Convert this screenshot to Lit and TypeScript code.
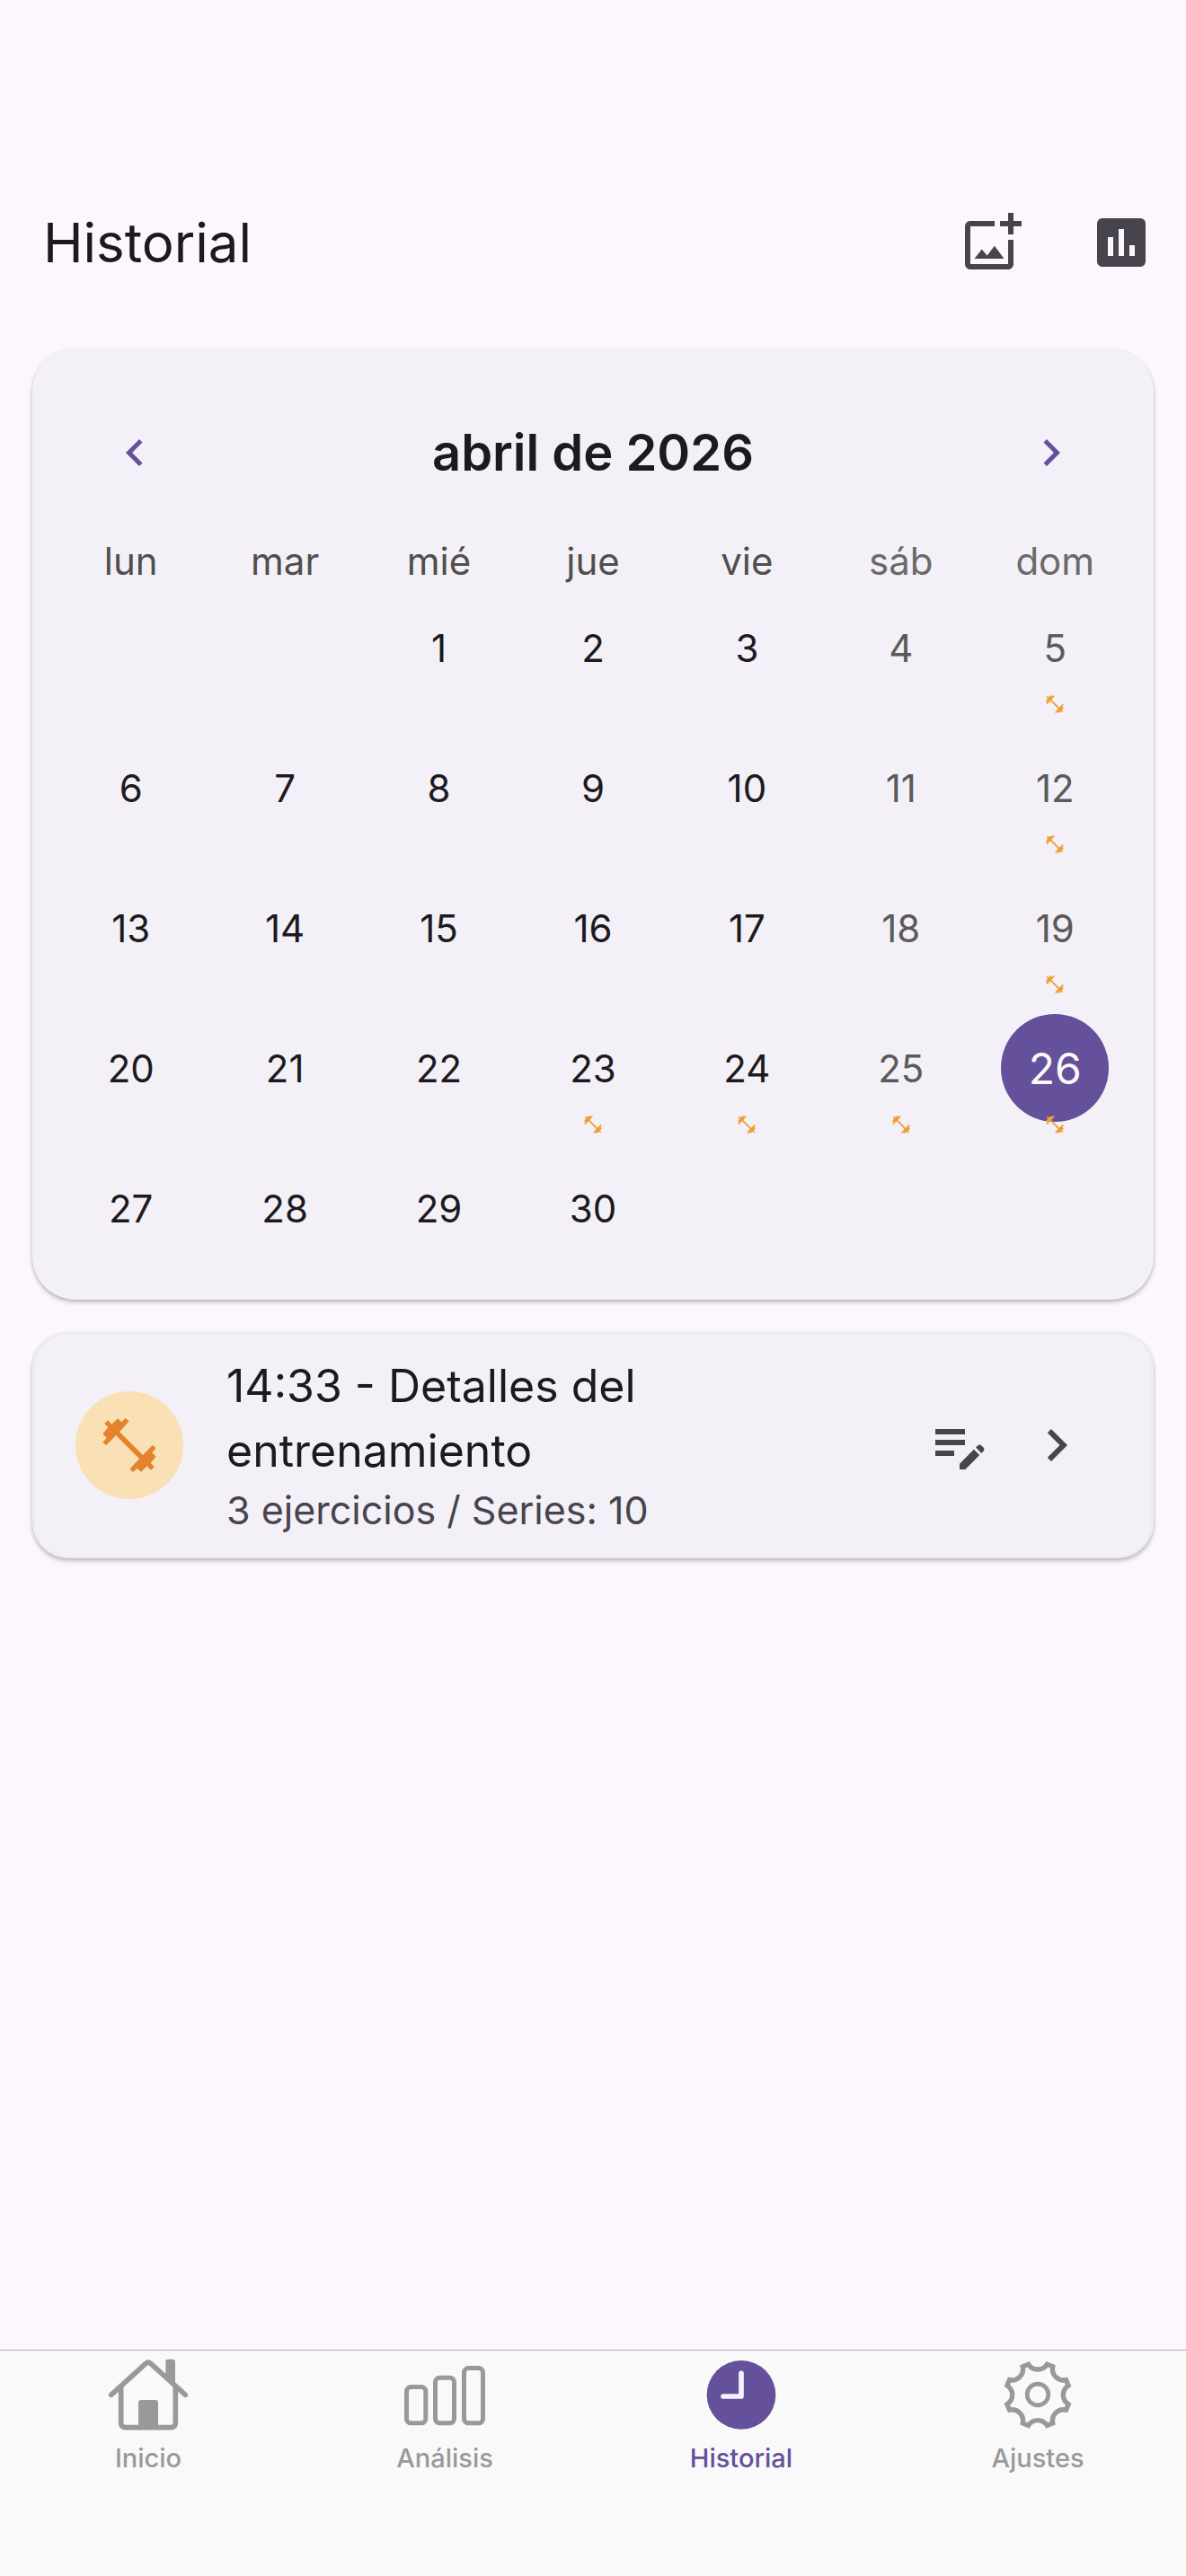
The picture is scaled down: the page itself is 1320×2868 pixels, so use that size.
import { LitElement, html, css, svg, nothing } from "lit";
import { customElement, state } from "lit/decorators.js";
import { classMap } from "lit/directives/class-map.js";

const WEEKDAYS = ["lun", "mar", "mié", "jue", "vie", "sáb", "dom"];
const FIRST_COLUMN = 2;
const DAYS_IN_MONTH = 30;
const TRAINING_DAYS = new Set([5, 12, 19, 23, 24, 25, 26]);

/** Outline of a cog: eight short teeth joined by concave arcs. */
function cogPath(cx: number, cy: number, radius: number, notch: number): string {
  const at = (deg: number) => {
    const a = (deg * Math.PI) / 180;
    return `${(cx + radius * Math.sin(a)).toFixed(1)} ${(cy - radius * Math.cos(a)).toFixed(1)}`;
  };
  let d = `M${at(-17)}`;
  for (let k = 0; k < 8; k++) {
    d += `A${notch} ${notch} 0 0 0 ${at(k * 45 + 17)}L${at(k * 45 + 28)}`;
  }
  return d + "Z";
}

const dumbbell = html`<svg class="dumbbell" viewBox="144 159 216 216" aria-hidden="true">
  <path fill="currentColor" d="M180 184L193 197L213 178L226 190L239 177L251 187L219 222L297 300L329 267L341 276L328 292L341 305L323 326L335 339L324 350L311 337L291 356L278 344L265 357L253 347L285 312L207 234L175 267L163 258L176 242L163 229L181 208L169 195Z"/>
</svg>`;

const material = (d: string) =>
  html`<svg viewBox="0 0 24 24" aria-hidden="true"><path fill="currentColor" d=${d}></path></svg>`;

const ICONS = {
  addPhoto:
    "M18 20H4V6h9V4H4c-1.1 0-2 .9-2 2v14c0 1.1.9 2 2 2h14c1.1 0 2-.9 2-2v-9h-2v9zm-7.79-3.17l-1.96-2.36L5.5 18h11l-3.54-4.71zM20 4V1h-2v3h-3v2h3v3h2V6h3V4h-3z",
  assessment:
    "M19 3H5c-1.1 0-2 .9-2 2v14c0 1.1.9 2 2 2h14c1.1 0 2-.9 2-2V5c0-1.1-.9-2-2-2zM9 17H7v-7h2v7zm4 0h-2V7h2v10zm4 0h-2v-4h2v4z",
  left: "M15.41 7.41L14 6l-6 6 6 6 1.41-1.41L10.83 12z",
  right: "M10 6L8.59 7.41 13.17 12l-4.58 4.59L10 18l6-6z",
  editNote:
    "M3 10h11v2H3v-2zm0-2h11V6H3v2zm0 8h7v-2H3v2zm15.01-3.13.71-.71c.39-.39 1.02-.39 1.41 0l.71.71c.39.39.39 1.02 0 1.41l-.71.71-2.12-2.12zm-.71.71-5.3 5.3V21h2.12l5.3-5.3-2.12-2.12z",
};

const TABS = [
  {
    label: "Inicio",
    icon: html`<svg viewBox="60 60 270 270" aria-hidden="true">${svg`
      <path d="M71 199L187 94Q195 87 203 94L319 199" fill="none" stroke="currentColor" stroke-width="17" stroke-linecap="round"/>
      <path d="M104 170V292Q104 308 120 308H270Q286 308 286 292V170" fill="none" stroke="currentColor" stroke-width="17"/>
      <path d="M253 88Q253 80 261 80H277Q285 80 285 88V166L253 138Z" fill="currentColor"/>
      <path d="M162 308V225Q162 216 171 216H219Q228 216 228 225V308Z" fill="currentColor"/>`}</svg>`,
  },
  {
    label: "Análisis",
    icon: html`<svg viewBox="1050 60 270 270" aria-hidden="true">${svg`
      <g fill="none" stroke="currentColor" stroke-width="15">
        <rect x="1057.5" y="172.5" width="64" height="121" rx="15"/>
        <rect x="1153.5" y="141.5" width="63" height="152" rx="15"/>
        <rect x="1249.5" y="109.5" width="63" height="184" rx="15"/>
      </g>`}</svg>`,
  },
  {
    label: "Historial",
    icon: html`<svg viewBox="120 60 270 270" aria-hidden="true">${svg`
      <circle cx="255" cy="199" r="115" fill="currentColor"/>
      <path d="M255 127V204H195" fill="none" stroke="#f6f2fb" stroke-width="17" stroke-linecap="round" stroke-linejoin="round"/>`}</svg>`,
  },
  {
    label: "Ajustes",
    icon: html`<svg viewBox="1110 60 270 270" aria-hidden="true">${svg`
      <path d=${cogPath(1245, 199, 107, 37)} fill="none" stroke="currentColor" stroke-width="16"/>
      <circle cx="1245" cy="198" r="35.5" fill="none" stroke="currentColor" stroke-width="14"/>`}</svg>`,
  },
];

@customElement("app-root")
export class AppRoot extends LitElement {
  @state() private selected = 26;
  @state() private tab = "Historial";

  static styles = css`
    :host {
      display: flex;
      flex-direction: column;
      min-height: 100vh;
      background: #fcf7fe;
      color: #1c1a20;
      font-family: Inter, "Liberation Sans", sans-serif;
    }
    * {
      box-sizing: border-box;
    }
    svg {
      display: block;
      width: 72px;
      height: 72px;
    }
    button {
      display: block;
      margin: 0;
      padding: 0;
      border: 0;
      background: none;
      color: inherit;
      font: inherit;
      cursor: pointer;
    }
    h1,
    h2,
    h3,
    p {
      margin: 0;
      font-weight: 400;
    }
    .bar {
      display: flex;
      align-items: center;
      justify-content: space-between;
      height: 168px;
      margin-top: 186px;
      padding: 0 36px 0 48px;
    }
    .bar h1 {
      font-size: 60px;
      line-height: 84px;
    }
    .actions {
      display: flex;
      gap: 72px;
      color: #48444d;
    }
    main {
      flex: 1;
      display: flex;
      flex-direction: column;
      gap: 36px;
      padding: 34px 36px;
    }
    .card {
      background: #f3f1f7;
      box-shadow: 0 3px 5px rgba(0, 0, 0, 0.22), 0 1px 3px rgba(0, 0, 0, 0.1);
    }
    .calendar {
      padding: 24px;
      border-radius: 48px;
    }
    .month {
      display: flex;
      align-items: center;
      justify-content: space-between;
      height: 183px;
      margin-bottom: 12px;
      padding: 0 60px;
    }
    .month svg {
      width: 60px;
      height: 60px;
      color: #64509b;
    }
    .month h2 {
      font-size: 56px;
      font-weight: 600;
      line-height: 72px;
    }
    table {
      width: 100%;
      table-layout: fixed;
      border-collapse: collapse;
    }
    th,
    td {
      padding: 0;
      text-align: center;
      font-weight: 400;
      font-size: 42px;
    }
    th {
      height: 36px;
      line-height: 36px;
      color: #4f4f4f;
    }
    td {
      height: 156px;
    }
    th.weekend {
      color: #6a6a6a;
    }
    td.weekend {
      color: #5a5a5a;
    }
    .day {
      position: relative;
      width: 100%;
      height: 156px;
      display: grid;
      place-items: center;
    }
    .number {
      display: grid;
      place-items: center;
      width: 120px;
      height: 120px;
      border-radius: 50%;
    }
    .selected .number {
      background: #64509b;
      color: #fafafa;
      font-size: 48px;
    }
    .day .dumbbell {
      position: absolute;
      bottom: 3px;
      left: 50%;
      width: 24px;
      height: 24px;
      margin-left: -12px;
      color: #f09e33;
    }
    .workout {
      display: flex;
      align-items: center;
      padding: 21px 69px 21px 45px;
      border: 3px solid #ededee;
      border-radius: 40px;
    }
    .avatar {
      flex: none;
      display: grid;
      place-items: center;
      width: 120px;
      height: 120px;
      margin-right: 48px;
      border-radius: 50%;
      background: #f9e0b5;
      color: #e4822e;
    }
    .text {
      flex: 1;
    }
    .text h3 {
      font-size: 50px;
      line-height: 72px;
    }
    .text p {
      font-size: 43px;
      line-height: 60px;
      color: #48444d;
    }
    .tools {
      display: flex;
      gap: 36px;
      margin-left: 84px;
      color: #48444d;
    }
    nav {
      display: flex;
      height: 252px;
      border-top: 1px solid #acabad;
      background: #f9f9f9;
    }
    nav a {
      flex: 1;
      display: flex;
      flex-direction: column;
      align-items: center;
      gap: 9px;
      padding-top: 3px;
      color: #999;
      font-size: 29px;
      font-weight: 500;
      line-height: 36px;
      text-decoration: none;
    }
    nav a.active {
      color: #64509b;
    }
    nav svg {
      width: 90px;
      height: 90px;
    }
  `;

  private renderDay(day: number) {
    if (day < 1 || day > DAYS_IN_MONTH) return nothing;
    return html`<button
      class=${classMap({ day: true, selected: day === this.selected })}
      aria-pressed=${day === this.selected}
      @click=${() => (this.selected = day)}
    >
      <span class="number">${day}</span>
      ${TRAINING_DAYS.has(day) ? dumbbell : nothing}
    </button>`;
  }

  render() {
    const weeks = Math.ceil((FIRST_COLUMN + DAYS_IN_MONTH) / 7);
    return html`
      <header class="bar">
        <h1>Historial</h1>
        <div class="actions">
          <button aria-label="Añadir foto">${material(ICONS.addPhoto)}</button>
          <button aria-label="Estadísticas">${material(ICONS.assessment)}</button>
        </div>
      </header>
      <main>
        <section class="card calendar">
          <div class="month">
            <button aria-label="Mes anterior">${material(ICONS.left)}</button>
            <h2>abril de 2026</h2>
            <button aria-label="Mes siguiente">${material(ICONS.right)}</button>
          </div>
          <table>
            <thead>
              <tr>
                ${WEEKDAYS.map((d, i) => html`<th scope="col" class=${classMap({ weekend: i > 4 })}>${d}</th>`)}
              </tr>
            </thead>
            <tbody>
              ${Array.from(
                { length: weeks },
                (_, w) => html`<tr>
                  ${WEEKDAYS.map(
                    (_d, i) => html`<td class=${classMap({ weekend: i > 4 })}>
                      ${this.renderDay(w * 7 + i - FIRST_COLUMN + 1)}
                    </td>`,
                  )}
                </tr>`,
              )}
            </tbody>
          </table>
        </section>
        <article class="card workout">
          <div class="avatar">${dumbbell}</div>
          <div class="text">
            <h3>14:33 - Detalles del entrenamiento</h3>
            <p>3 ejercicios / Series: 10</p>
          </div>
          <div class="tools">
            <button aria-label="Editar">${material(ICONS.editNote)}</button>
            <button aria-label="Abrir">${material(ICONS.right)}</button>
          </div>
        </article>
      </main>
      <nav>
        ${TABS.map(
          (t) => html`<a
            href="#${t.label}"
            class=${classMap({ active: t.label === this.tab })}
            @click=${() => (this.tab = t.label)}
            >${t.icon}<span>${t.label}</span></a
          >`,
        )}
      </nav>
    `;
  }
}
